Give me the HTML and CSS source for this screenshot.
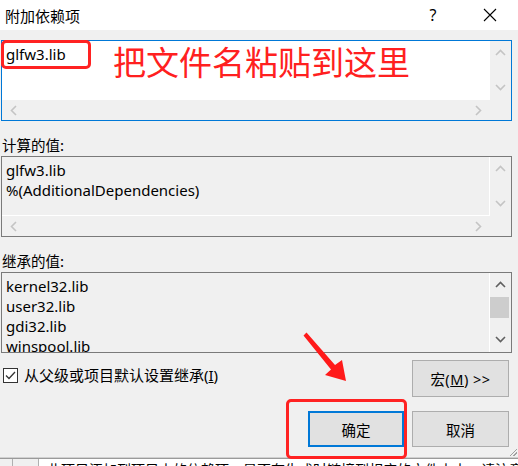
FILE: index.html
```html
<!DOCTYPE html>
<html lang="zh-CN">
<head>
<meta charset="utf-8">
<title>附加依赖项</title>
<link rel="stylesheet" href="styles.css">
</head>
<body>
<div class="window">
  <div class="titlebar">
    <span class="title">附加依赖项</span>
    <span class="tb-btn help">?</span>
    <span class="tb-btn close">
      <svg width="14" height="14" viewBox="0 0 14 14"><path d="M1 1 L13 13 M13 1 L1 13" stroke="#000" stroke-width="1.1" fill="none"/></svg>
    </span>
  </div>
  <div class="content">
    <div class="box box-edit">
      <div class="text white">glfw3.lib</div>
      <div class="vscroll">
        <svg class="chev" width="11" height="7" viewBox="0 0 11 7"><path d="M1 6 L5.5 1.5 L10 6" stroke="#c4c4c4" stroke-width="1.6" fill="none"/></svg>
        <svg class="chev" width="11" height="7" viewBox="0 0 11 7"><path d="M1 1 L5.5 5.5 L10 1" stroke="#c4c4c4" stroke-width="1.6" fill="none"/></svg>
      </div>
      <div class="hscroll">
        <svg width="7" height="11" viewBox="0 0 7 11"><path d="M6 1 L1.5 5.5 L6 10" stroke="#c4c4c4" stroke-width="1.6" fill="none"/></svg>
        <svg width="7" height="11" viewBox="0 0 7 11"><path d="M1 1 L5.5 5.5 L1 10" stroke="#c4c4c4" stroke-width="1.6" fill="none"/></svg>
      </div>
      <div class="corner"></div>
    </div>

    <div class="label">计算的值:</div>
    <div class="box box-ro">
      <div class="text grey">glfw3.lib<br>%(AdditionalDependencies)</div>
      <div class="vscroll">
        <svg class="chev" width="11" height="7" viewBox="0 0 11 7"><path d="M1 6 L5.5 1.5 L10 6" stroke="#c4c4c4" stroke-width="1.6" fill="none"/></svg>
        <svg class="chev" width="11" height="7" viewBox="0 0 11 7"><path d="M1 1 L5.5 5.5 L10 1" stroke="#c4c4c4" stroke-width="1.6" fill="none"/></svg>
      </div>
      <div class="hscroll hs-ro">
        <svg width="7" height="11" viewBox="0 0 7 11"><path d="M6 1 L1.5 5.5 L6 10" stroke="#c4c4c4" stroke-width="1.6" fill="none"/></svg>
        <svg width="7" height="11" viewBox="0 0 7 11"><path d="M1 1 L5.5 5.5 L1 10" stroke="#c4c4c4" stroke-width="1.6" fill="none"/></svg>
      </div>
      <div class="corner"></div>
    </div>

    <div class="label">继承的值:</div>
    <div class="box box-inh">
      <div class="text grey">kernel32.lib<br>user32.lib<br>gdi32.lib<br>winspool.lib</div>
      <div class="vscroll">
        <svg class="chev" width="11" height="7" viewBox="0 0 11 7"><path d="M1 6 L5.5 1.5 L10 6" stroke="#606060" stroke-width="1.6" fill="none"/></svg>
        <div class="track"><div class="thumb"></div></div>
        <svg class="chev" width="11" height="7" viewBox="0 0 11 7"><path d="M1 1 L5.5 5.5 L10 1" stroke="#606060" stroke-width="1.6" fill="none"/></svg>
      </div>
    </div>

    <div class="row-opts">
      <label class="check">
        <span class="checkbox">
          <svg width="11" height="9" viewBox="0 0 11 9"><path d="M1 4.5 L4 7.5 L10 1" stroke="#333" stroke-width="1.3" fill="none"/></svg>
        </span>
        <span class="check-text">从父级或项目默认设置继承(<u>I</u>)</span>
      </label>
      <span class="btn macro">宏(<u>M</u>) &gt;&gt;</span>
    </div>

    <div class="row-btns">
      <span class="btn ok">确定</span>
      <span class="btn">取消</span>
    </div>
    <span class="grip"></span>

    <div class="mark mark-lib"></div>
    <div class="mark mark-ok"></div>
    <div class="note">把文件名粘贴到这里</div>
    <svg class="arrow" width="60" height="60" viewBox="300 330 60 60">
      <polygon points="303.5,335.5 306.5,332.5 335,365 342,360 346,381 325,375 331,369.5" fill="#ff1a1a"/>
    </svg>
  </div>
  <div class="under">
    <span class="under-gut"></span>
    <span class="under-text">此项目添加到项目中的依赖项，是否在生成时链接到相应的文件中去，请注意</span>
  </div>
</div>
</body>
</html>
```

FILE: styles.css
```css
html, body {
  margin: 0;
  padding: 0;
}
body {
  width: 518px;
  height: 466px;
  overflow: hidden;
  background: #ffffff;
  font-family: "Noto Sans", "Noto Sans CJK SC", sans-serif;
  color: #000;
}
.window {
  display: flex;
  flex-direction: column;
  width: 518px;
  height: 466px;
}
.titlebar {
  height: 30px;
  display: flex;
  align-items: center;
  background: #ffffff;
}
.title {
  font-size: 15px;
  padding-left: 5px;
  flex: 1;
  font-family: "Noto Sans CJK SC", sans-serif;
}
.tb-btn {
  width: 46px;
  height: 30px;
  display: flex;
  align-items: center;
  justify-content: center;
}
.help {
  font-size: 16px;
  margin-right: 11px;
  font-family: "Noto Sans", sans-serif;
}
.close {
  margin-right: 5px;
}
.content {
  position: relative;
  height: 428px;
  background: #f0f0f0;
  padding: 10px 0 0 1px;
  box-sizing: border-box;
  display: flex;
  flex-direction: column;
  border-bottom: 1px solid #d0d0d0;
}
.box {
  width: 511px;
  height: 81px;
  box-sizing: border-box;
  display: grid;
  grid-template-columns: 488px 21px;
  grid-template-rows: 59px 20px;
  flex: none;
}
.box-edit {
  border: 1px solid #0078d7;
}
.box-ro, .box-inh {
  border: 1px solid #7a7a7a;
}
.box-inh {
  grid-template-rows: 79px;
}
.text {
  font-size: 15px;
  line-height: 20px;
  padding: 3px 0 0 4px;
  overflow: hidden;
  white-space: nowrap;
}
.white {
  background: #ffffff;
}
.grey {
  background: #f0f0f0;
  border-right: 1px solid #ffffff;
  border-bottom: 1px solid #ffffff;
}
.box-inh .grey {
  border-bottom: none;
}
.vscroll {
  background: #f0f0f0;
  display: flex;
  flex-direction: column;
  align-items: center;
  justify-content: space-between;
  padding: 8px 0 9px;
  box-sizing: border-box;
}
.track {
  flex: 1;
  width: 100%;
  padding-top: 9px;
  box-sizing: border-box;
}
.thumb {
  width: 19px;
  height: 21px;
  background: #cdcdcd;
}
.hscroll {
  background: #f0f0f0;
  display: flex;
  align-items: center;
  justify-content: space-between;
  padding: 0 8px 0 8px;
}
.corner {
  background: #f0f0f0;
}
.label {
  font-size: 14.5px;
  line-height: 20px;
  margin: 14px 0 1px 1px;
  font-family: "Noto Sans CJK SC", sans-serif;
}
.row-opts {
  display: flex;
  justify-content: space-between;
  align-items: flex-start;
  margin-top: 7px;
  width: 508px;
}
.check {
  display: flex;
  align-items: center;
  gap: 6px;
  margin: 6px 0 0 2px;
  font-size: 15px;
  line-height: 18px;
  font-family: "Noto Sans", "Noto Sans CJK SC", sans-serif;
}
.checkbox {
  width: 15px;
  height: 15px;
  box-sizing: border-box;
  border: 1px solid #333333;
  background: #ffffff;
  display: flex;
  align-items: center;
  justify-content: center;
  flex: none;
}
.check-text {
  white-space: nowrap;
}
.btn {
  width: 97px;
  height: 37px;
  box-sizing: border-box;
  background: #e1e1e1;
  border: 1px solid #adadad;
  display: flex;
  align-items: center;
  justify-content: center;
  font-size: 14.5px;
  font-family: "Noto Sans", "Noto Sans CJK SC", sans-serif;
}
.macro {
  letter-spacing: 0.5px;
}
.row-btns {
  display: flex;
  justify-content: flex-end;
  gap: 8px;
  margin-top: 14px;
  width: 508px;
}
.row-btns .btn {
  height: 36px;
}
.ok {
  width: 96px;
  border: 2px solid #0078d7;
}
.grip {
  position: absolute;
  right: 1px;
  bottom: 1px;
  width: 8px;
  height: 8px;
  background: linear-gradient(135deg, transparent 55%, #a0a0a0 55%, #a0a0a0 62%, transparent 62%, transparent 75%, #a0a0a0 75%, #a0a0a0 82%, transparent 82%);
}
.mark {
  position: absolute;
  border: 3px solid #ff2222;
  border-radius: 5px;
  box-sizing: border-box;
}
.mark-lib {
  left: 1px;
  top: 10px;
  width: 90px;
  height: 29px;
}
.mark-ok {
  left: 286px;
  top: 369px;
  width: 121px;
  height: 60px;
}
.note {
  position: absolute;
  left: 113px;
  top: 9px;
  font-size: 33px;
  line-height: 44px;
  color: #ff2020;
  font-family: "Noto Sans CJK SC", sans-serif;
  white-space: nowrap;
}
.arrow {
  position: absolute;
  left: 300px;
  top: 300px;
}
.under {
  flex: 1;
  display: flex;
  overflow: hidden;
  background: #ffffff;
  border-top: 1px solid #9a9a9a;
}
.under-gut {
  width: 27px;
  background: #f0f0f0;
  border-left: 12px solid #f0f0f0;
  box-shadow: inset 1px 0 0 #b0b0b0, inset -1px 0 0 #b0b0b0;
  flex: none;
}
.under-text {
  font-size: 14px;
  line-height: 14px;
  padding: 3px 0 0 8px;
  white-space: nowrap;
  font-family: "Noto Sans CJK SC", sans-serif;
}
```
